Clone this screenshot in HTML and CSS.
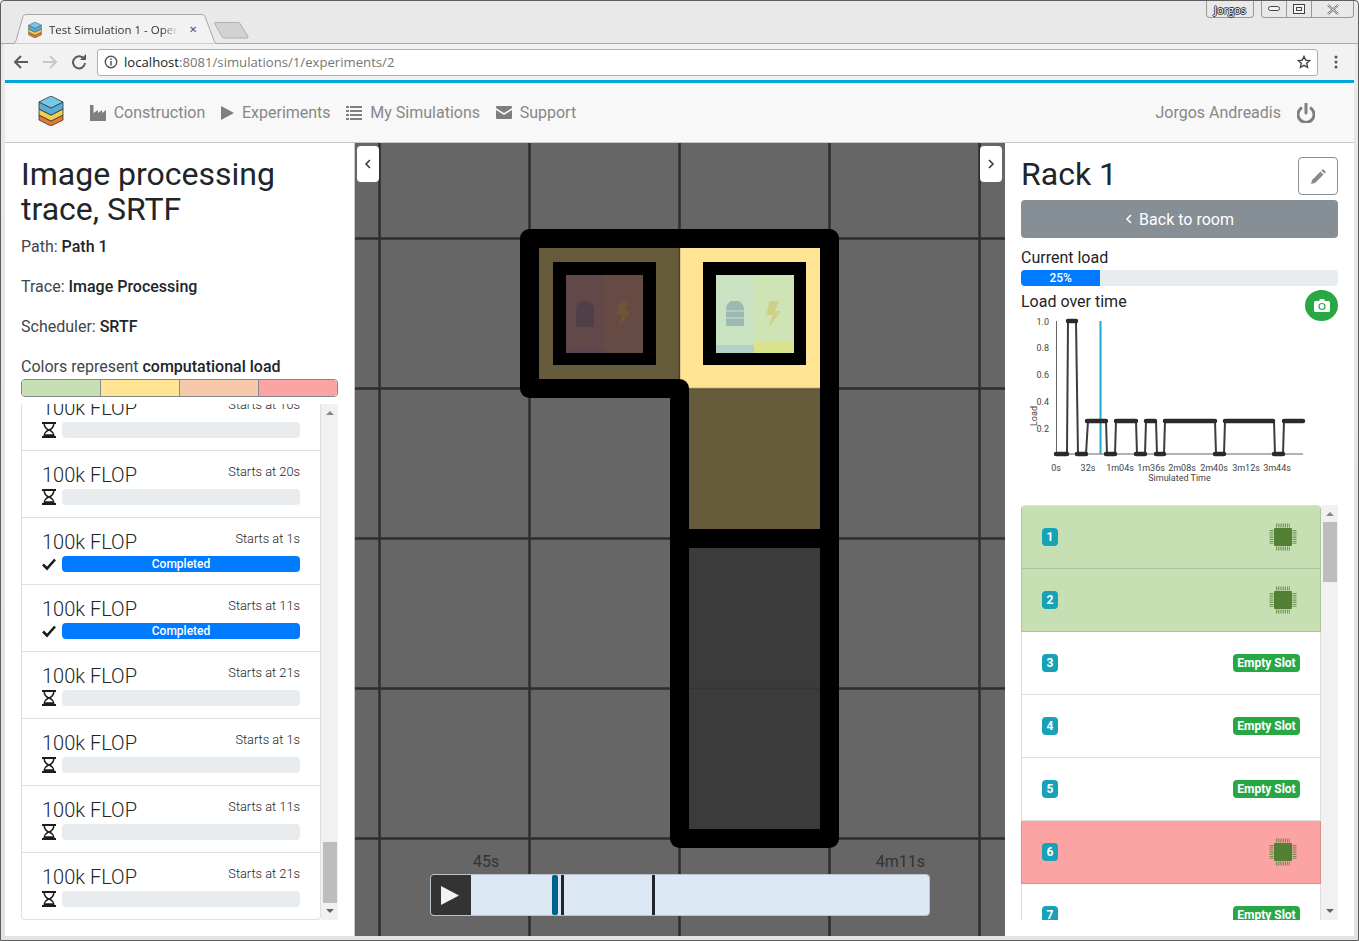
FILE: index.html
```html
<!DOCTYPE html>
<html lang="en">
<head>
  <meta charset="UTF-8">
  <title>Test Simulation 1 - OpenDC</title>
  <link rel="stylesheet" href="styles.css">
</head>
<body>
  <svg class="icon-defs" width="0" height="0">
    <symbol id="i-cube" viewBox="0 0 26 30">
      <path d="M1 19v5l12 6 12-6v-5l-12 6z" fill="#e8772e" stroke="#333" stroke-width=".8"/>
      <path d="M1 13v6l12 6 12-6v-6l-12 6z" fill="#ecd04f" stroke="#333" stroke-width=".8"/>
      <path d="M1 6v7l12 6 12-6V6l-12 6z" fill="#57afd6" stroke="#333" stroke-width=".8"/>
      <path d="M1 6l12-6 12 6-12 6z" fill="#74c8e8" stroke="#333" stroke-width=".8"/>
    </symbol>
    <symbol id="i-hourglass" viewBox="0 0 14 16">
      <path d="M0 0h14v2h-1.500c0 3-2 5-3.500 6 1.500 1 3.500 3 3.500 6H14v2H0v-2h1.500c0-3 2-5 3.500-6-1.500-1-3.500-3-3.500-6H0zM3 2c0 2 1.500 4 4 5.200C9.500 6 11 4 11 2zM7 8.800C4.500 10 3.200 11.500 3 12.500h8C10.800 11.500 9.500 10 7 8.800z" fill-rule="evenodd" fill="#1c1c1c"/>
      <path d="M3 12.500h8l.6 1.500H2.400z" fill="#1c1c1c"/>
    </symbol>
    <symbol id="i-check" viewBox="0 0 14 12">
      <path d="M1 6.500l4 4 8-9" fill="none" stroke="#1c1c1c" stroke-width="2.600"/>
    </symbol>
    <symbol id="i-chip" viewBox="0 0 28 28">
      <rect x="5" y="5" width="18" height="18" rx="1" fill="#528035"/>
      <path d="M7 2.500h14M7 25.500h14M2.500 7v14M25.500 7v14" fill="none" stroke="#528035" stroke-opacity=".75" stroke-width="4" stroke-dasharray="1.200 1"/>
    </symbol>
  </svg>

  <div class="window">
    <div class="tabstrip">
      <div class="tab">
        <svg class="tab-shape" width="204" height="30" viewBox="0 0 204 30"><path d="M0 29.500q2 0 3-3l7-24q.7-2 3-2h176q2 0 3 2l9 24q1 3 3 3" fill="#f2f2f2" stroke="#a8a8a8"/></svg>
        <svg class="tab-favicon" width="14" height="16"><use href="#i-cube"/></svg>
        <span class="tab-title">Test Simulation 1 - Open</span>
        <span class="tab-close">&#10005;</span>
      </div>
      <svg class="new-tab" width="36" height="18" viewBox="0 0 36 18"><path d="M1 1.500h23q1.500 0 2 1l8 13q.5 1.500-1 1.500H10q-1.500 0-2-1.500L.5 2.500Q.5 1.500 1 1.500z" fill="#d2d2d2" stroke="#b0b0b0"/></svg>
      <div class="win-controls">
        <span class="win-user">Jorgos</span>
        <div class="win-buttons">
          <span class="win-btn"><svg width="12" height="6"><rect x=".5" y=".5" width="11" height="4" rx="2" fill="#f4f4f4" stroke="#444"/></svg></span>
          <span class="win-btn"><svg width="12" height="10"><rect x=".5" y=".5" width="11" height="9" fill="#f4f4f4" stroke="#444"/><rect x="3.500" y="3.500" width="5" height="3" fill="none" stroke="#444"/></svg></span>
          <span class="win-btn win-close"><svg width="14" height="11"><path d="M2 1l10 9M12 1L2 10" stroke="#555" stroke-width="2"/><path d="M2 1l10 9M12 1L2 10" stroke="#f4f4f4" stroke-width="1"/></svg></span>
        </div>
      </div>
    </div>

    <div class="toolbar">
      <svg class="tool-btn" width="16" height="16" viewBox="0 0 16 16"><path d="M15 8H2M8 2L2 8l6 6" fill="none" stroke="#5a5a5a" stroke-width="2"/></svg>
      <svg class="tool-btn" width="16" height="16" viewBox="0 0 16 16"><path d="M1 8h13M8 2l6 6-6 6" fill="none" stroke="#c8c8c8" stroke-width="2"/></svg>
      <svg class="tool-btn" width="16" height="16" viewBox="0 0 16 16"><path d="M13 5a6 6 0 1 0 1 4" fill="none" stroke="#5a5a5a" stroke-width="2"/><path d="M9 6h6V0z" fill="#5a5a5a"/></svg>
      <div class="address">
        <svg width="14" height="14" viewBox="0 0 14 14"><circle cx="7" cy="7" r="5.700" fill="none" stroke="#555" stroke-width="1.400"/><path d="M7 6v4.500M7 3.500v1.500" stroke="#555" stroke-width="1.500"/></svg>
        <span class="url"><b>localhost</b>:8081/simulations/1/experiments/2</span>
        <svg class="star" width="14" height="14" viewBox="0 0 24 24"><path d="M12 2.500l2.900 6.300 6.900.8-5.100 4.700 1.400 6.800-6.100-3.400-6.100 3.400 1.400-6.800-5.100-4.700 6.900-.8z" fill="none" stroke="#444" stroke-width="2.400"/></svg>
      </div>
      <svg class="menu-dots" width="4" height="14" viewBox="0 0 4 14"><circle cx="2" cy="2" r="1.500" fill="#555"/><circle cx="2" cy="7" r="1.500" fill="#555"/><circle cx="2" cy="12" r="1.500" fill="#555"/></svg>
    </div>

    <div class="page">
      <nav class="navbar">
        <svg class="nav-logo" width="26" height="30"><use href="#i-cube"/></svg>
        <a class="nav-item"><svg width="16" height="16" viewBox="0 0 16 16"><path d="M0 0h3.500v8L8 5v3l4-3v3l4-3v11H0z" fill="#7f7f7f"/></svg>Construction</a>
        <a class="nav-item"><svg width="13" height="14" viewBox="0 0 13 14"><path d="M0 0l13 7-13 7z" fill="#7f7f7f"/></svg>Experiments</a>
        <a class="nav-item"><svg width="16" height="14" viewBox="0 0 16 14"><path d="M0 0h3v2H0zM4 0h12v2H4zM0 4h3v2H0zM4 4h12v2H4zM0 8h3v2H0zM4 8h12v2H4zM0 12h3v2H0zM4 12h12v2H4z" fill="#7f7f7f"/></svg>My Simulations</a>
        <a class="nav-item"><svg width="16" height="13" viewBox="0 0 16 13"><path d="M1 0h14q1 0 1 1v1L8 7 0 2V1q0-1 1-1zM0 4l8 5 8-5v8q0 1-1 1H1q-1 0-1-1z" fill="#7f7f7f"/></svg>Support</a>
        <div class="nav-right">
          <a class="nav-user">Jorgos Andreadis</a>
          <svg width="18" height="20" viewBox="0 0 18 20"><path d="M5 4.500a8 8 0 1 0 8 0" fill="none" stroke="#7f7f7f" stroke-width="3"/><path d="M9 1v9" stroke="#7f7f7f" stroke-width="3" stroke-linecap="round"/></svg>
        </div>
      </nav>

      <main class="main">
        <aside class="panel panel-left">
          <h2>Image processing trace, SRTF</h2>
          <p>Path: <strong>Path 1</strong></p>
          <p>Trace: <strong>Image Processing</strong></p>
          <p>Scheduler: <strong>SRTF</strong></p>
          <p class="legend-label">Colors represent <strong>computational load</strong></p>
          <div class="legend">
            <span class="load-low"></span><span class="load-mid"></span><span class="load-high"></span><span class="load-full"></span>
          </div>
          <div class="scroll-box task-box">
            <div class="task-list">
              <div class="task">
                <div class="task-head"><span class="task-name">100k FLOP</span><span class="task-start">Starts at 10s</span></div>
                <div class="task-body"><svg width="14" height="16"><use href="#i-hourglass"/></svg><div class="bar"></div></div>
              </div>
              <div class="task">
                <div class="task-head"><span class="task-name">100k FLOP</span><span class="task-start">Starts at 20s</span></div>
                <div class="task-body"><svg width="14" height="16"><use href="#i-hourglass"/></svg><div class="bar"></div></div>
              </div>
              <div class="task">
                <div class="task-head"><span class="task-name">100k FLOP</span><span class="task-start">Starts at 1s</span></div>
                <div class="task-body"><svg width="14" height="16"><use href="#i-check"/></svg><div class="bar bar-done">Completed</div></div>
              </div>
              <div class="task">
                <div class="task-head"><span class="task-name">100k FLOP</span><span class="task-start">Starts at 11s</span></div>
                <div class="task-body"><svg width="14" height="16"><use href="#i-check"/></svg><div class="bar bar-done">Completed</div></div>
              </div>
              <div class="task">
                <div class="task-head"><span class="task-name">100k FLOP</span><span class="task-start">Starts at 21s</span></div>
                <div class="task-body"><svg width="14" height="16"><use href="#i-hourglass"/></svg><div class="bar"></div></div>
              </div>
              <div class="task">
                <div class="task-head"><span class="task-name">100k FLOP</span><span class="task-start">Starts at 1s</span></div>
                <div class="task-body"><svg width="14" height="16"><use href="#i-hourglass"/></svg><div class="bar"></div></div>
              </div>
              <div class="task">
                <div class="task-head"><span class="task-name">100k FLOP</span><span class="task-start">Starts at 11s</span></div>
                <div class="task-body"><svg width="14" height="16"><use href="#i-hourglass"/></svg><div class="bar"></div></div>
              </div>
              <div class="task task-last">
                <div class="task-head"><span class="task-name">100k FLOP</span><span class="task-start">Starts at 21s</span></div>
                <div class="task-body"><svg width="14" height="16"><use href="#i-hourglass"/></svg><div class="bar"></div></div>
              </div>
            </div>
            <div class="scrollbar task-scroll">
              <span class="arrow-up"></span>
              <span class="thumb"></span>
              <span class="arrow-down"></span>
            </div>
          </div>
        </aside>

        <section class="canvas">
          <svg class="map" width="650" height="793" viewBox="355 143 650 793">
            <rect x="355" y="143" width="650" height="793" fill="#666"/>
            <path d="M379.500 143v793M529.500 143v793M679.500 143v793M829.500 143v793M979.500 143v793M355 238.500h650M355 388.500h650M355 538.500h650M355 688.500h650M355 838.500h650" stroke="#2e2e2e" stroke-width="2.500"/>
            <rect x="530" y="239" width="150" height="150" fill="#665b3a"/>
            <rect x="680" y="239" width="150" height="150" fill="#ffe494"/>
            <rect x="680" y="389" width="150" height="150" fill="#665b3a"/>
            <rect x="680" y="539" width="150" height="150" fill="#3b3b3b"/>
            <rect x="680" y="689" width="150" height="150" fill="#3b3b3b"/>
            <path d="M679.500 239v150M680 388.500h150M680 688.500h150" stroke="#2e2e2e" stroke-opacity=".6" stroke-width="1.500"/>
            <path d="M529.500 238.500H829.500V838.500H679.500V388.500H529.500ZM679.500 538.500H829.500" fill="none" stroke="#000" stroke-width="19" stroke-linejoin="round"/>

            <rect x="553" y="262" width="103" height="103" fill="#000"/>
            <rect x="566" y="275" width="38" height="78" fill="#63484a"/>
            <rect x="604" y="275" width="39" height="78" fill="#654b44"/>
            <rect x="566" y="349" width="38" height="4" fill="#5a4650"/>
            <path d="M576 310q0-6 5-9h8q5 3 5 9v16q0 1-1 1h-16q-1 0-1-1z" fill="#4f3f49"/>
            <path d="M620 301h9l-4 10h6l-12 16 3-12h-6z" fill="#6f5436"/>

            <rect x="703" y="262" width="103" height="103" fill="#000"/>
            <rect x="716" y="275" width="38" height="78" fill="#c9e2c2"/>
            <rect x="754" y="275" width="40" height="78" fill="#cfe4b5"/>
            <rect x="716" y="345" width="38" height="8" fill="#b2d2c9"/>
            <rect x="754" y="342" width="40" height="11" fill="#d9e28c"/>
            <path d="M726 310q0-6 5-9h8q5 3 5 9v15q0 1-1 1h-16q-1 0-1-1z" fill="#9bb8b5"/>
            <path d="M726 311h18M726 318h18" stroke="#c9e2c2" stroke-width="1"/>
            <path d="M770 301h9l-4 10h6l-12 16 3-12h-6z" fill="#cfcf85"/>
          </svg>

          <button class="collapse collapse-left"><svg width="8" height="10" viewBox="0 0 8 10"><path d="M6 1L2 5l4 4" fill="none" stroke="#333" stroke-width="1.500"/></svg></button>
          <button class="collapse collapse-right"><svg width="8" height="10" viewBox="0 0 8 10"><path d="M2 1l4 4-4 4" fill="none" stroke="#333" stroke-width="1.500"/></svg></button>

          <div class="timeline">
            <div class="timeline-labels"><span>45s</span><span>4m11s</span></div>
            <div class="timeline-bar">
              <button class="play"><svg width="18" height="19" viewBox="0 0 18 19"><path d="M0 0l18 9.500L0 19z" fill="#f2f2f2"/></svg></button>
              <div class="timeline-track">
                <span class="marker-now"></span>
                <span class="marker marker-a"></span>
                <span class="marker marker-b"></span>
              </div>
            </div>
          </div>
        </section>

        <aside class="panel panel-right">
          <div class="rack-head">
            <h2>Rack 1</h2>
            <button class="edit-btn"><svg width="15" height="15" viewBox="0 0 15 15"><path d="M0 15l1-4 8.500-8.500 3 3L4 14zM10.500 1.500l1-1q.5-.5 1 0l2 2q.5.500 0 1l-1 1z" fill="#8a8a8a"/></svg></button>
          </div>
          <button class="back-btn"><svg width="8" height="10" viewBox="0 0 8 10"><path d="M6 1L2 5l4 4" fill="none" stroke="#fff" stroke-width="1.600"/></svg>Back to room</button>
          <div class="section-label current-label">Current load</div>
          <div class="load-bar"><div class="load-fill">25%</div></div>
          <div class="chart-head">
            <span class="section-label chart-label">Load over time</span>
            <button class="camera-btn"><svg width="16" height="13" viewBox="0 0 16 13"><path d="M1.500 2H5l1-2h4l1 2h3.500q1.500 0 1.500 1.500v8q0 1.500-1.500 1.500h-13Q0 13 0 11.500v-8Q0 2 1.500 2z" fill="#fff"/><circle cx="8" cy="7.500" r="3" fill="none" stroke="#28a745" stroke-width="1.200"/></svg></button>
          </div>
          <svg class="chart" width="317" height="175" viewBox="1021 315 317 175">
            <path d="M1056.500 321V454H1303" fill="none" stroke="#666" stroke-width="1"/>
            <line x1="1100.500" y1="321" x2="1100.500" y2="454" stroke="#1aa9d0" stroke-width="2"/>
            <path d="M1056 454H1067L1068 321H1076L1078 454H1086L1088 421H1106L1107 454H1115L1116 421H1136L1137 454H1145L1146 421H1156L1157 454H1164L1165 421H1215L1216 454H1224L1225 421H1274L1275 454H1283L1284 421H1304" fill="none" stroke="#3c3c3c" stroke-width="2"/>
            <path d="M1056 454H1067M1068 321H1076M1077 454H1086M1087 421H1106M1106 454H1115M1116 421H1136M1136 454H1145M1146 421H1155M1156 454H1164M1165 421H1215M1215 454H1224M1225 421H1273M1274 454H1283M1284 421H1303" fill="none" stroke="#2a2a2a" stroke-width="4.500" stroke-linecap="round"/>
            <g class="chart-text">
              <text x="1049" y="325" text-anchor="end">1.0</text>
              <text x="1049" y="351" text-anchor="end">0.8</text>
              <text x="1049" y="378" text-anchor="end">0.6</text>
              <text x="1049" y="405" text-anchor="end">0.4</text>
              <text x="1049" y="432" text-anchor="end">0.2</text>
              <text transform="translate(1037 426) rotate(-90)">Load</text>
              <text x="1056" y="471" text-anchor="middle">0s</text>
              <text x="1088" y="471" text-anchor="middle">32s</text>
              <text x="1120" y="471" text-anchor="middle">1m04s</text>
              <text x="1151" y="471" text-anchor="middle">1m36s</text>
              <text x="1182" y="471" text-anchor="middle">2m08s</text>
              <text x="1214" y="471" text-anchor="middle">2m40s</text>
              <text x="1246" y="471" text-anchor="middle">3m12s</text>
              <text x="1277" y="471" text-anchor="middle">3m44s</text>
              <text x="1179.500" y="481" text-anchor="middle">Simulated Time</text>
            </g>
          </svg>
          <div class="scroll-box slot-box">
            <div class="slot-list">
              <div class="slot slot-green"><span class="slot-num">1</span><svg width="28" height="28"><use href="#i-chip"/></svg></div>
              <div class="slot slot-green"><span class="slot-num">2</span><svg width="28" height="28"><use href="#i-chip"/></svg></div>
              <div class="slot"><span class="slot-num">3</span><span class="slot-empty">Empty Slot</span></div>
              <div class="slot"><span class="slot-num">4</span><span class="slot-empty">Empty Slot</span></div>
              <div class="slot"><span class="slot-num">5</span><span class="slot-empty">Empty Slot</span></div>
              <div class="slot slot-red"><span class="slot-num">6</span><svg width="28" height="28"><use href="#i-chip"/></svg></div>
              <div class="slot"><span class="slot-num">7</span><span class="slot-empty">Empty Slot</span></div>
            </div>
            <div class="scrollbar slot-scroll">
              <span class="arrow-up"></span>
              <span class="thumb"></span>
              <span class="arrow-down"></span>
            </div>
          </div>
        </aside>
      </main>
    </div>
  </div>
</body>
</html>
```

FILE: styles.css
```css
* {
  margin: 0;
  padding: 0;
  box-sizing: border-box;
}

html, body {
  width: 1359px;
  height: 941px;
  overflow: hidden;
}

body {
  font-family: Roboto, "Liberation Sans", sans-serif;
  font-size: 16px;
  color: #212529;
}

.icon-defs {
  position: absolute;
}

button {
  border: none;
  font-family: inherit;
}

.window {
  width: 1359px;
  height: 941px;
  display: flex;
  flex-direction: column;
  padding: 0 4px 4px;
  background: linear-gradient(#e9e9e9, #e2e2e2);
  border: 1px solid #5f5f5f;
  border-radius: 4px 4px 0 0;
}

/* browser chrome */
.tabstrip {
  height: 43px;
  flex: none;
  display: flex;
  align-items: flex-end;
  margin: 0 -4px;
  padding-left: 12px;
  border-bottom: 1px solid #aaa;
}

.tab {
  position: relative;
  width: 204px;
  height: 30px;
  flex: none;
  margin-bottom: -1px;
  display: flex;
  align-items: center;
  padding-left: 15px;
  font-family: "Open Sans", sans-serif;
  font-size: 11.500px;
  color: #333;
}

.tab-shape {
  position: absolute;
  left: 0;
  top: 0;
}

.tab-favicon,
.tab-title,
.tab-close {
  position: relative;
}

.tab-favicon {
  flex: none;
  margin-top: 1px;
}

.tab-title {
  width: 129px;
  flex: none;
  margin-left: 7px;
  white-space: nowrap;
  overflow: hidden;
  -webkit-mask-image: linear-gradient(90deg, #000 88%, transparent 100%);
  mask-image: linear-gradient(90deg, #000 88%, transparent 100%);
}

.tab-close {
  font-size: 10px;
  color: #555;
  margin-left: 11px;
}

.new-tab {
  margin: 0 0 4px -3px;
  flex: none;
}

.win-controls {
  margin-left: auto;
  align-self: flex-start;
  display: flex;
  gap: 7px;
  padding-right: 4px;
}

.win-user {
  width: 48px;
  height: 17px;
  border: 1px solid #999;
  border-top: none;
  border-radius: 0 0 4px 4px;
  text-align: center;
  font-family: "Open Sans", sans-serif;
  font-size: 11px;
  line-height: 17px;
  color: #f4f4f4;
  text-shadow: 1px 0 0 #333, -1px 0 0 #333, 0 1px 0 #333, 0 -1px 0 #333;
}

.win-buttons {
  display: flex;
  height: 17px;
  border: 1px solid #999;
  border-top: none;
  border-radius: 0 0 4px 4px;
}

.win-btn {
  width: 25px;
  display: flex;
  align-items: center;
  justify-content: center;
  border-right: 1px solid #999;
}

.win-close {
  width: 41px;
  border-right: none;
}

.toolbar {
  height: 36px;
  flex: none;
  display: flex;
  align-items: center;
  background: #f2f2f2;
  padding-left: 9px;
  margin: 0 -1px;
}

.tool-btn {
  flex: none;
  margin-right: 13px;
}

.tool-btn:nth-child(3) {
  margin-right: 10px;
}

.address {
  width: 1221px;
  height: 27px;
  flex: none;
  display: flex;
  align-items: center;
  gap: 6px;
  padding: 0 6px;
  background: #fff;
  border: 1px solid #b0b0b0;
  border-radius: 3px;
}

.url {
  font-family: "Open Sans", sans-serif;
  font-size: 13.150px;
  color: #767676;
}

.url b {
  font-weight: 400;
  color: #222;
}

.star {
  margin-left: auto;
}

.menu-dots {
  margin-left: 16px;
}

/* app */
.page {
  flex: 1;
  display: flex;
  flex-direction: column;
  background: #fff;
  border-top: 3px solid #00a6d6;
  min-height: 0;
}

.navbar {
  height: 60px;
  flex: none;
  display: flex;
  align-items: center;
  gap: 15.700px;
  padding: 0 39px 0 33px;
  background: #f8f8f8;
  border-bottom: 1px solid #c8c8c8;
}

.nav-logo {
  margin-right: 10px;
  margin-top: -3px;
}

.nav-item {
  display: flex;
  align-items: center;
  gap: 8px;
  color: #878787;
}

.nav-right {
  margin-left: auto;
  display: flex;
  align-items: center;
  gap: 16px;
  color: #878787;
}

.main {
  flex: 1;
  display: flex;
  min-height: 0;
}

.panel {
  flex: none;
  background: #fff;
  padding: 14px 16px 0;
  display: flex;
  flex-direction: column;
}

.panel-left {
  width: 350px;
  border-right: 1px solid #c8c8c8;
  padding-right: 16px;
}

.panel-right {
  width: 349px;
  padding-right: 16px;
}

h2 {
  font-size: 32px;
  font-weight: 400;
  line-height: 35px;
  margin-bottom: 8px;
}

p {
  line-height: 24px;
  color: #41464b;
  margin-bottom: 16px;
}

strong {
  font-weight: 500;
  color: #212529;
}

.legend-label {
  margin-bottom: 0;
}

.legend {
  height: 18px;
  flex: none;
  display: flex;
  border: 1px solid #808a90;
  border-radius: 4px;
  overflow: hidden;
}

.legend span {
  flex: 1;
  border-right: 1px solid #808a90;
}

.legend span:last-child {
  border-right: none;
}

.load-low { background: #c6e0b4; }
.load-mid { background: #ffe494; }
.load-high { background: #f7c9ab; }
.load-full { background: #fca4a4; }

/* lists with a scrollbar beside them */
.scroll-box {
  display: flex;
  overflow: hidden;
  flex: none;
}

.task-box {
  height: 516px;
  margin-top: 7px;
}

.task-list {
  width: 300px;
  flex: none;
  overflow: hidden;
}

.task {
  height: 67px;
  padding: 9px 20px 0;
  border: 1px solid #dfdfdf;
  border-top: none;
  background: #fff;
}

.task:first-child {
  margin-top: -20px;
}

.task-last {
  border-radius: 0 0 4px 4px;
}

.task-head {
  height: 29px;
  display: flex;
  align-items: center;
  justify-content: space-between;
}

.task-name {
  font-size: 20px;
  font-weight: 300;
}

.task-start {
  font-size: 12.800px;
  font-weight: 300;
  margin-bottom: 6px;
}

.task-body {
  display: flex;
  gap: 6px;
}

.task-body svg {
  flex: none;
}

.bar {
  flex: 1;
  height: 16px;
  background: #e9ecef;
  border-radius: 4px;
}

.bar-done {
  background: #007bff;
  color: #fff;
  font-size: 12px;
  font-weight: 500;
  line-height: 16px;
  text-align: center;
}

.scrollbar {
  width: 17px;
  flex: none;
  display: flex;
  flex-direction: column;
  background: #f1f1f1;
  padding: 0 1px 0 2px;
}

.thumb {
  display: block;
  width: 14px;
  background: #bdbdbd;
}

.arrow-up,
.arrow-down {
  align-self: center;
  width: 0;
  height: 0;
  border-left: 4px solid transparent;
  border-right: 4px solid transparent;
  margin-left: -1px;
}

.arrow-up {
  border-bottom: 4px solid #888;
  margin-top: 7px;
}

.arrow-down {
  border-top: 4px solid #666;
  margin-top: auto;
  margin-bottom: 7px;
}

.task-scroll .thumb {
  height: 61px;
  margin-top: auto;
}

.task-scroll .arrow-down {
  margin-top: 6px;
}

.slot-scroll .thumb {
  height: 60px;
  margin-top: 6px;
}

/* room map */
.canvas {
  position: relative;
  width: 650px;
  flex: none;
  overflow: hidden;
}

.map {
  display: block;
}

.collapse {
  position: absolute;
  top: 3px;
  width: 22px;
  height: 36px;
  background: #fff;
  border-radius: 4px;
  display: flex;
  align-items: center;
  justify-content: center;
}

.collapse-left {
  left: 2px;
}

.collapse-right {
  right: 3px;
}

.timeline {
  position: absolute;
  left: 75px;
  top: 708px;
  width: 500px;
}

.timeline-labels {
  display: flex;
  justify-content: space-between;
  padding: 0 5px 0 43px;
  height: 23px;
  line-height: 22px;
  color: #333;
}

.timeline-bar {
  height: 42px;
  display: flex;
  border: 1px solid #b9c3cd;
  border-radius: 4px;
  overflow: hidden;
  background: #dde8f5;
}

.play {
  width: 40px;
  flex: none;
  background: #333;
  display: flex;
  align-items: center;
  justify-content: center;
  padding-right: 2px;
}

.timeline-track {
  position: relative;
  flex: 1;
}

.marker-now {
  position: absolute;
  left: 81px;
  top: 0;
  width: 6px;
  height: 100%;
  background: #005f8c;
  border-radius: 2px;
}

.marker {
  position: absolute;
  top: 0;
  width: 3px;
  height: 100%;
  background: #212529;
}

.marker-a {
  left: 90px;
}

.marker-b {
  left: 181px;
}

/* rack panel */
.rack-head {
  display: flex;
  justify-content: space-between;
  align-items: flex-start;
  height: 43px;
  flex: none;
}

.rack-head h2 {
  margin: 0;
}

.edit-btn {
  width: 40px;
  height: 38px;
  background: #fff;
  border: 1px solid #868e96;
  border-radius: 4px;
  display: flex;
  align-items: center;
  justify-content: center;
}

.back-btn {
  height: 38px;
  flex: none;
  background: #868e96;
  color: #fff;
  font-size: 16px;
  border-radius: 4px;
  display: flex;
  align-items: center;
  justify-content: center;
  gap: 6px;
}

.section-label {
  line-height: 24px;
}

.current-label {
  margin-top: 8px;
}

.load-bar {
  height: 16px;
  flex: none;
  background: #e9ecef;
  border-radius: 4px;
  overflow: hidden;
}

.load-fill {
  width: 25%;
  height: 100%;
  background: #007bff;
  color: #fff;
  font-size: 12px;
  font-weight: 500;
  line-height: 16px;
  text-align: center;
}

.chart-head {
  height: 26px;
  flex: none;
  margin-top: 3px;
  display: flex;
  justify-content: space-between;
  align-items: flex-start;
}

.chart-label {
  padding-top: 1px;
}

.camera-btn {
  width: 33px;
  height: 31px;
  margin-top: 1px;
  position: relative;
  background: #28a745;
  border-radius: 50%;
  display: flex;
  align-items: center;
  justify-content: center;
}

.chart {
  display: block;
  flex: none;
}

.chart-text text {
  font-size: 9px;
  fill: #444;
}

.slot-box {
  height: 415px;
  margin-top: 15px;
}

.slot-list {
  width: 300px;
  flex: none;
  overflow: hidden;
  border-top: 1px solid rgba(0, 0, 0, 0.125);
  border-radius: 4px 4px 0 0;
}

.slot {
  height: 63px;
  flex: none;
  display: flex;
  align-items: center;
  justify-content: space-between;
  padding: 0 20px;
  border: 1px solid rgba(0, 0, 0, 0.125);
  border-top: none;
  background: #fff;
}

.slot-green {
  background: #c6e0b4;
}

.slot-red {
  background: #fca4a4;
}

.slot-num {
  width: 16px;
  height: 18px;
  background: #17a2b8;
  color: #fff;
  border-radius: 4px;
  font-size: 12px;
  font-weight: 700;
  line-height: 18px;
  text-align: center;
}

.slot svg {
  margin-right: 3px;
}

.slot-empty {
  width: 67px;
  height: 18px;
  background: #28a745;
  color: #fff;
  border-radius: 4px;
  font-size: 12px;
  font-weight: 700;
  line-height: 18px;
  text-align: center;
  white-space: nowrap;
}
```
